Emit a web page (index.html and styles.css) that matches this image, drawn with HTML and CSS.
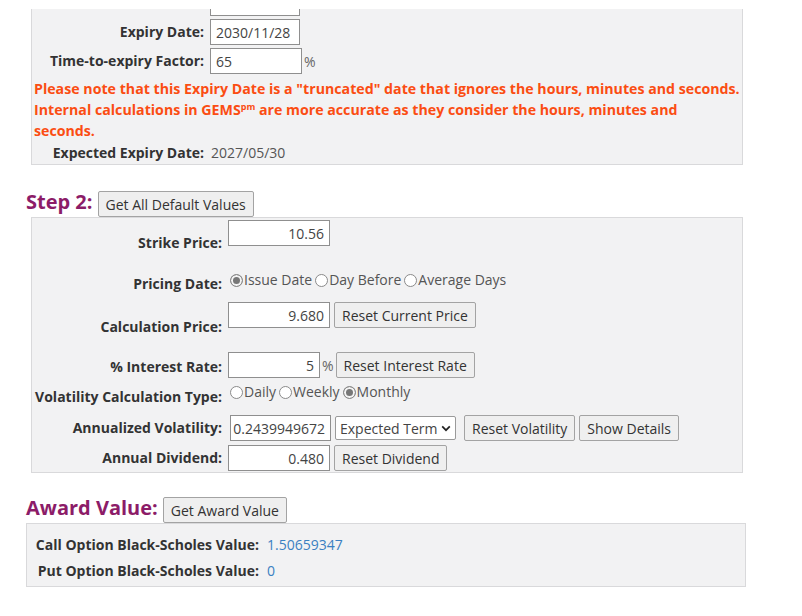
FILE: index.html
```html
<!DOCTYPE html>
<html lang="en">
<head>
<meta charset="utf-8">
<title>GEMS Award Valuation</title>
<link rel="stylesheet" href="styles.css">
</head>
<body>
<div class="page">
  <div class="panel panel-top">
    <div class="row row-cut">
      <span class="lbl"></span>
      <div class="val val-bottom"><input class="inp w90" type="text" value=""></div>
    </div>
    <div class="row row-29">
      <span class="lbl">Expiry Date:</span>
      <div class="val val-top2"><input class="inp w90" type="text" value="2030/11/28"></div>
    </div>
    <div class="row row-29">
      <span class="lbl">Time-to-expiry Factor:</span>
      <div class="val val-top2"><input class="inp w92" type="text" value="65"><span class="unit">%</span></div>
    </div>
    <p class="note">Please note that this Expiry Date is a "truncated" date that ignores the hours, minutes and seconds.<br>Internal calculations in GEMS<sup>pm</sup> are more accurate as they consider the hours, minutes and<br>seconds.</p>
    <div class="row row-22">
      <span class="lbl">Expected Expiry Date:</span>
      <span class="val text">2027/05/30</span>
    </div>
  </div>

  <div class="section-head head-step">
    <h2>Step 2:</h2>
    <button class="btn" type="button">Get All Default Values</button>
  </div>

  <div class="panel panel-step">
    <div class="row r-strike">
      <span class="lbl">Strike Price:</span>
      <div class="val off2"><input class="inp num w102" type="text" value="10.56"></div>
    </div>
    <div class="row r-pricing">
      <span class="lbl">Pricing Date:</span>
      <div class="val off4 radios">
        <label class="radio"><input type="radio" name="pd" checked>Issue Date</label>
        <label class="radio"><input type="radio" name="pd">Day Before</label>
        <label class="radio"><input type="radio" name="pd">Average Days</label>
      </div>
    </div>
    <div class="row r-calc">
      <span class="lbl">Calculation Price:</span>
      <div class="val off2 group">
        <input class="inp num w102" type="text" value="9.680">
        <button class="btn" type="button">Reset Current Price</button>
      </div>
    </div>
    <div class="row r-interest">
      <span class="lbl">% Interest Rate:</span>
      <div class="val off0 group">
        <input class="inp num w92" type="text" value="5">
        <span class="unit unit-i">%</span>
        <button class="btn" type="button">Reset Interest Rate</button>
      </div>
    </div>
    <div class="row r-voltype">
      <span class="lbl">Volatility Calculation Type:</span>
      <div class="val off2 radios">
        <label class="radio"><input type="radio" name="vt">Daily</label>
        <label class="radio"><input type="radio" name="vt">Weekly</label>
        <label class="radio"><input type="radio" name="vt" checked>Monthly</label>
      </div>
    </div>
    <div class="row r-annual">
      <span class="lbl">Annualized Volatility:</span>
      <div class="val off3 group group-vol">
        <input class="inp num w101" type="text" value="0.2439949672">
        <span class="select-wrap">
          <select class="select"><option>Expected Term</option></select>
          <svg class="chev" width="10" height="7" viewBox="0 0 10 7" aria-hidden="true"><path d="M1.2 1.4 L5 5.2 L8.8 1.4" fill="none" stroke="#222" stroke-width="1.7"/></svg>
        </span>
        <button class="btn btn-gap" type="button">Reset Volatility</button>
        <button class="btn" type="button">Show Details</button>
      </div>
    </div>
    <div class="row r-div">
      <span class="lbl">Annual Dividend:</span>
      <div class="val off3 group">
        <input class="inp num w102" type="text" value="0.480">
        <button class="btn" type="button">Reset Dividend</button>
      </div>
    </div>
  </div>

  <div class="section-head head-award">
    <h2>Award Value:</h2>
    <button class="btn" type="button">Get Award Value</button>
  </div>

  <div class="panel panel-award">
    <div class="row row-26">
      <span class="lbl">Call Option Black-Scholes Value:</span>
      <span class="val value">1.50659347</span>
    </div>
    <div class="row row-26">
      <span class="lbl">Put Option Black-Scholes Value:</span>
      <span class="val value">0</span>
    </div>
  </div>
</div>
</body>
</html>
```

FILE: styles.css
```css
* { box-sizing: border-box; }

body {
  margin: 0;
  background: #ffffff;
  font-family: "Open Sans", "DejaVu Sans", sans-serif;
  font-size: 14px;
  color: #333333;
}

.page {
  padding: 9px 0 0 26px;
  width: 760px;
}

.panel {
  background: #f2f2f3;
  border: 1px solid #d9d9db;
}

.row {
  display: flex;
  align-items: center;
}

.lbl {
  flex: none;
  text-align: right;
  font-weight: 700;
  color: #333333;
  white-space: nowrap;
}

.val {
  display: flex;
  align-items: center;
  white-space: nowrap;
}

/* ---------- top panel ---------- */
.panel-top {
  margin-left: 5px;
  width: 712px;
  border-top: none;
  padding-bottom: 1px;
  overflow: hidden;
}
.panel-top .lbl { width: 172px; }
.panel-top .row { gap: 6px; }

.row-cut { height: 8px; align-items: flex-end; }
.val-bottom { align-self: flex-end; margin-bottom: 1px; }
.row-29 { height: 29px; }
.val-top2 { align-self: flex-start; margin-top: 2px; }
.row-22 { height: 22px; }

.text { color: #555555; padding-left: 1px; }

.note {
  margin: 3px 0 0 0;
  padding-left: 2px;
  color: #fb4d12;
  font-weight: 700;
  font-size: 14.2px;
  line-height: 21px;
  white-space: nowrap;
}
.note sup {
  font-size: 9px;
  vertical-align: top;
  line-height: 14px;
  position: relative;
  top: 1px;
}

/* ---------- inputs ---------- */
.inp {
  height: 26px;
  border: 1px solid #8f8f8f;
  border-radius: 0;
  background: #ffffff;
  font-family: "Open Sans", sans-serif;
  font-size: 14px;
  color: #444444;
  padding: 0 4px 0 5px;
  margin: 0;
  outline: none;
}
.inp.num { text-align: right; padding: 0 5px 0 2px; }
.w90 { width: 90px; }
.w92 { width: 92px; }
.w101 { width: 101px; }
.w102 { width: 102px; }

.unit {
  margin-left: 2px;
  color: #666666;
  font-size: 14px;
}

/* ---------- buttons ---------- */
.btn {
  height: 26px;
  border: 1px solid #a3a3a3;
  border-radius: 2px;
  background: #efefef;
  color: #333333;
  font-family: "Open Sans", sans-serif;
  font-size: 14px;
  padding: 0 7px;
  margin: 0;
  white-space: nowrap;
}

/* ---------- section heads ---------- */
.section-head {
  display: flex;
  align-items: flex-end;
  gap: 5px;
}
.section-head h2 {
  margin: 0 0 2px 0;
  font-size: 20px;
  line-height: 26px;
  font-weight: 700;
  color: #8c1c68;
}
.head-step { margin-top: 24px; }
.head-award { margin-top: 22px; }

/* ---------- step 2 panel ---------- */
.panel-step {
  margin-left: 5px;
  width: 712px;
}
.panel-step .lbl { width: 190px; }
.panel-step .row { gap: 6px; }

.r-strike { height: 48px; }
.r-pricing { height: 34px; }
.r-calc { height: 52px; }
.r-interest { height: 28px; }
.r-voltype { height: 32px; }
.r-annual { height: 30px; }
.r-div { height: 30px; }

.off0 { align-self: flex-start; margin-top: 0; }
.off2 { align-self: flex-start; margin-top: 2px; }
.off3 { align-self: flex-start; margin-top: 3px; }
.off4 { align-self: flex-start; margin-top: 4px; }

.group { gap: 4px; }
.group-vol .w101 { margin-left: 2px; }
.unit-i { margin: 0 -2px 0 -2px; }
.btn-gap { margin-left: 4px; }

.radios {
  height: 20px;
  color: #555555;
  line-height: 20px;
}
.radio {
  display: inline-flex;
  align-items: center;
  margin-right: 1px;
}
.radio input {
  appearance: none;
  -webkit-appearance: none;
  width: 13px;
  height: 13px;
  margin: 0 1px 0 2px;
  border: 1px solid #8a8a8a;
  border-radius: 50%;
  background: #ffffff;
}
.radio input:checked {
  background: #777777;
  box-shadow: inset 0 0 0 2px #f4f4f4;
}

.select-wrap {
  position: relative;
  display: inline-block;
  height: 24px;
}
.select {
  appearance: none;
  -webkit-appearance: none;
  height: 24px;
  width: 121px;
  border: 1px solid #9a9a9a;
  border-radius: 2px;
  background: #ffffff;
  font-family: "Open Sans", sans-serif;
  font-size: 14px;
  color: #444444;
  padding: 0 0 0 4px;
  margin: 0;
}
.chev {
  position: absolute;
  right: 5px;
  top: 9px;
  pointer-events: none;
}

/* ---------- award panel ---------- */
.panel-award {
  width: 720px;
  padding: 7px 0 3px 0;
}
.panel-award .lbl { width: 232px; }
.panel-award .row { gap: 8px; }
.row-26 { height: 26px; }
.value { color: #3a80c2; }
```
